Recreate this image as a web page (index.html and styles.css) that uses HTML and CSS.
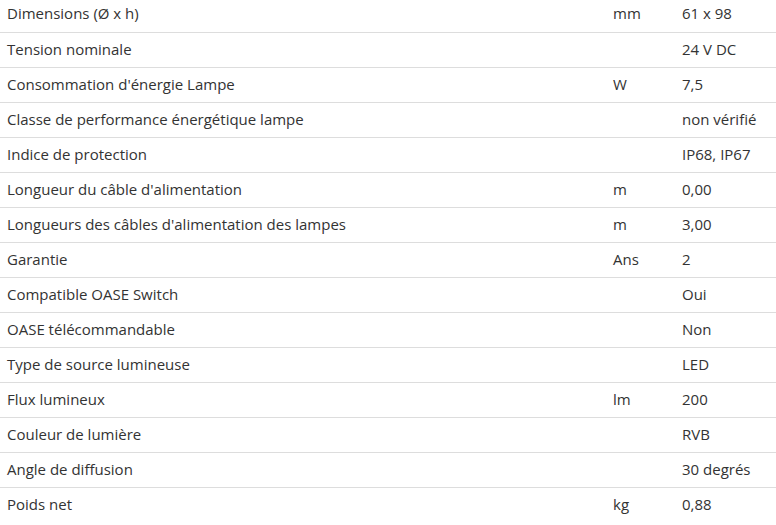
FILE: index.html
```html
<!DOCTYPE html>
<html lang="fr">
<head>
<meta charset="utf-8">
<link rel="stylesheet" href="styles.css">
</head>
<body>
<table class="specs">
<tbody>
<tr><td class="label">Dimensions (Ø x h)</td><td class="unit">mm</td><td class="value">61 x 98</td></tr>
<tr><td class="label">Tension nominale</td><td class="unit"></td><td class="value">24 V DC</td></tr>
<tr><td class="label">Consommation d'énergie Lampe</td><td class="unit">W</td><td class="value">7,5</td></tr>
<tr><td class="label">Classe de performance énergétique lampe</td><td class="unit"></td><td class="value">non vérifié</td></tr>
<tr><td class="label">Indice de protection</td><td class="unit"></td><td class="value">IP68, IP67</td></tr>
<tr><td class="label">Longueur du câble d'alimentation</td><td class="unit">m</td><td class="value">0,00</td></tr>
<tr><td class="label">Longueurs des câbles d'alimentation des lampes</td><td class="unit">m</td><td class="value">3,00</td></tr>
<tr><td class="label">Garantie</td><td class="unit">Ans</td><td class="value">2</td></tr>
<tr><td class="label">Compatible OASE Switch</td><td class="unit"></td><td class="value">Oui</td></tr>
<tr><td class="label">OASE télécommandable</td><td class="unit"></td><td class="value">Non</td></tr>
<tr><td class="label">Type de source lumineuse</td><td class="unit"></td><td class="value">LED</td></tr>
<tr><td class="label">Flux lumineux</td><td class="unit">lm</td><td class="value">200</td></tr>
<tr><td class="label">Couleur de lumière</td><td class="unit"></td><td class="value">RVB</td></tr>
<tr><td class="label">Angle de diffusion</td><td class="unit"></td><td class="value">30 degrés</td></tr>
<tr><td class="label">Poids net</td><td class="unit">kg</td><td class="value">0,88</td></tr>
</tbody>
</table>
</body>
</html>
```
FILE: styles.css
```css
html, body {
  margin: 0;
  padding: 0;
  background: #fff;
}
body {
  font-family: "Open Sans", "Liberation Sans", sans-serif;
  font-size: 15px;
  color: #333;
}
.specs {
  width: 100%;
  border-collapse: collapse;
  margin-top: -3px;
}
.specs tr {
  height: 35px;
}
.specs tr + tr td {
  border-top: 1px solid #ddd;
}
.specs td {
  padding: 0 0 2px 7px;
  vertical-align: middle;
  line-height: 20px;
}
.specs .label {
  width: 599px;
}
.specs .unit {
  width: 62px;
}
```
